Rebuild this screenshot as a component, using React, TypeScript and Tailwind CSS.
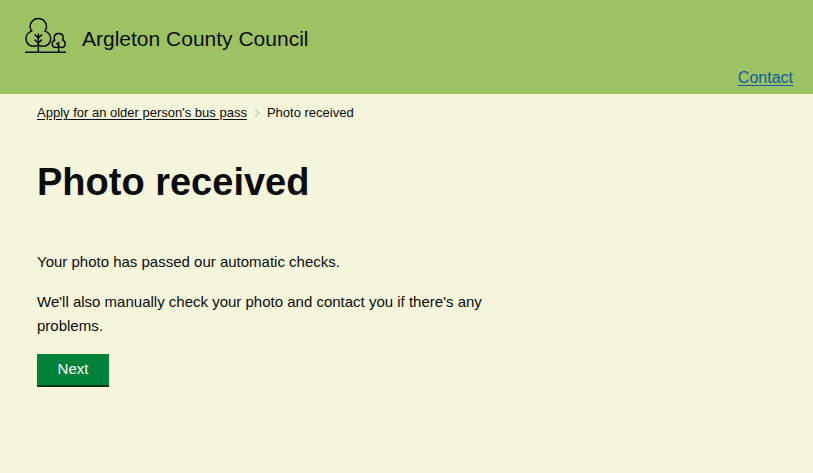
function TreesLogo() {
  return (
    <svg
      className="h-9 w-[42px] shrink-0"
      viewBox="0 0 42 36"
      fill="none"
      stroke="#0b0c0c"
      strokeWidth="1.5"
      aria-hidden="true"
    >
      <path d="M1 35.2H42" />
      <path d="M14.3 35V16.5" />
      <path d="M10.6 17.5l3.7 3.4 3.7-3.4M10.6 22.6l3.7 3.4 3.7-3.4" />
      <path d="M14.3 28.2C12.8 29 11.3 29.3 9.6 29.3C5.2 29.3 2 26 2 21.7C2 18 4.2 15.3 7.7 14.1C6.7 12.7 6.1 11.5 6.1 9.5C6.1 5 9.6 1.6 14.3 1.6C19 1.6 22.5 5 22.5 9.5C22.5 11.5 21.9 12.7 20.9 14.1C24.4 15.3 26.7 18 26.7 21.7C26.7 26 23.4 29.3 19 29.3C17.3 29.3 15.8 29 14.3 28.2Z" />
      <path d="M34.7 35V24.8M32.2 26l2.5 2.4" />
      <path d="M34.7 29.7C33.8 30.2 33 30.4 32 30.4C29.8 30.4 28.2 28.9 28.2 26.7C28.2 25 29.1 23.7 30.8 23C30.5 22.3 30.2 21.7 30.2 20.9C30.2 18.3 32.1 16.6 34.7 16.6C37.3 16.6 39.2 18.3 39.2 20.9C39.2 21.7 38.9 22.3 38.6 23C40.3 23.7 41.2 25 41.2 26.7C41.2 28.9 39.6 30.4 37.4 30.4C36.4 30.4 35.6 30.2 34.7 29.7Z" />
    </svg>
  );
}

export default function App() {
  return (
    <div className="min-h-screen bg-[#f5f5dc] font-['Helvetica_Neue','Liberation_Sans',Arial,sans-serif] text-[#0b0c0c]">
      <header className="bg-[#9dc264] px-5 pt-[15px] pb-[3px]">
        <div className="flex items-center gap-4 pl-1">
          <TreesLogo />
          <span className="pt-2 text-[21px] leading-8">Argleton County Council</span>
        </div>
        <nav className="flex justify-end pt-[10px]">
          <a href="#contact" className="text-base leading-[26px] text-[#0b61a4] underline underline-offset-2">
            Contact
          </a>
        </nav>
      </header>
      <div className="px-[37px]">
        <nav aria-label="Breadcrumb" className="pt-[9px]">
          <ol className="flex items-center text-[13px] leading-5">
            <li>
              <a href="#apply" className="underline underline-offset-2">
                Apply for an older person's bus pass
              </a>
            </li>
            <li className="flex items-center">
              <svg className="mx-[7px] h-2 w-[6px]" viewBox="0 0 6 8" fill="none" stroke="#c2c6c8" strokeWidth="1.2" aria-hidden="true">
                <path d="M1 0l4 4-4 4" />
              </svg>
              <span aria-current="page">Photo received</span>
            </li>
          </ol>
        </nav>
        <main className="max-w-[480px] pt-9">
          <h1 className="text-[38px] leading-[46px] font-bold">Photo received</h1>
          <p className="mt-[45px] text-[15px] leading-6">Your photo has passed our automatic checks.</p>
          <p className="mt-4 text-[15px] leading-6">
            We'll also manually check your photo and contact you if there's any problems.
          </p>
          <button
            type="button"
            className="mt-4 flex h-[33px] w-[72px] items-center justify-center border-b-2 border-[#003618] bg-[#00823b] pb-0.5 text-[15px] leading-6 text-white"
          >
            Next
          </button>
        </main>
      </div>
    </div>
  );
}
